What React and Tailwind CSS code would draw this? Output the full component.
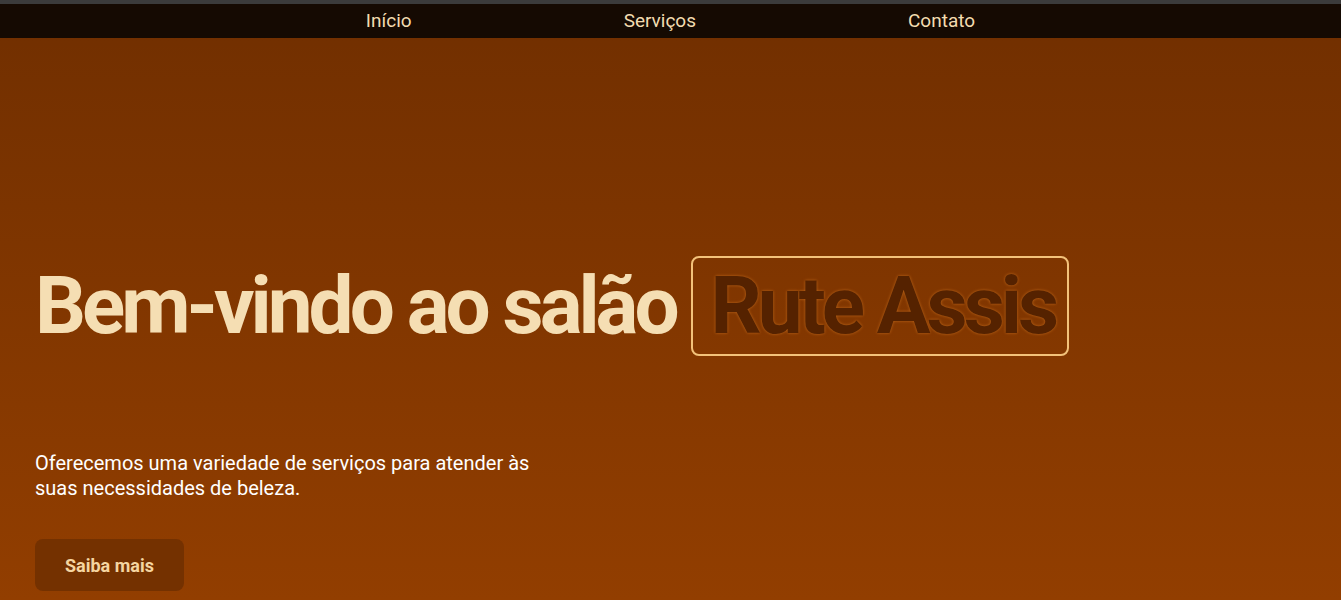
import React from 'react';

const links = ['Início', 'Serviços', 'Contato'];

const App = () => {
  return (
    <div
      className="min-h-[600px] w-full flex flex-col border-t-4 border-[#3b3b3b] bg-gradient-to-b from-[#712f00] to-[#923e00]"
      style={{ fontFamily: 'Roboto, "Liberation Sans", sans-serif' }}
    >
      {/* Navbar */}
      <nav className="h-[34px] bg-[#150a02] flex items-center justify-center pt-[2px]">
        <ul className="flex gap-[212px]">
          {links.map((l) => (
            <li key={l}>
              <a href="#" className="text-[19px] text-[#f3dcb0] leading-none">
                {l}
              </a>
            </li>
          ))}
        </ul>
      </nav>

      {/* Hero */}
      <section className="flex-1 flex flex-col px-[35px] pt-[218px]">
        <h1 className="flex items-center text-[80px] font-bold leading-none tracking-[-4px] text-[#f5deb3]">
          <span>Bem-vindo ao salão</span>
          <span className="ml-[15px] pl-[18px] pr-[12px] h-[100px] flex items-center border-2 border-[#f3c27a] rounded-lg text-[#552200] [text-shadow:0_0_3px_#c26a1a]">
            Rute Assis
          </span>
        </h1>

        <p className="mt-[95px] max-w-[530px] text-[20px] leading-[25px] text-white">
          Oferecemos uma variedade de serviços para atender às suas necessidades de beleza.
        </p>

        <button className="mt-[38px] w-[149px] h-[52px] rounded-lg bg-[#743100] text-[#f5d5a0] font-bold text-[18px]">
          Saiba mais
        </button>
      </section>
    </div>
  );
};

export default App;
